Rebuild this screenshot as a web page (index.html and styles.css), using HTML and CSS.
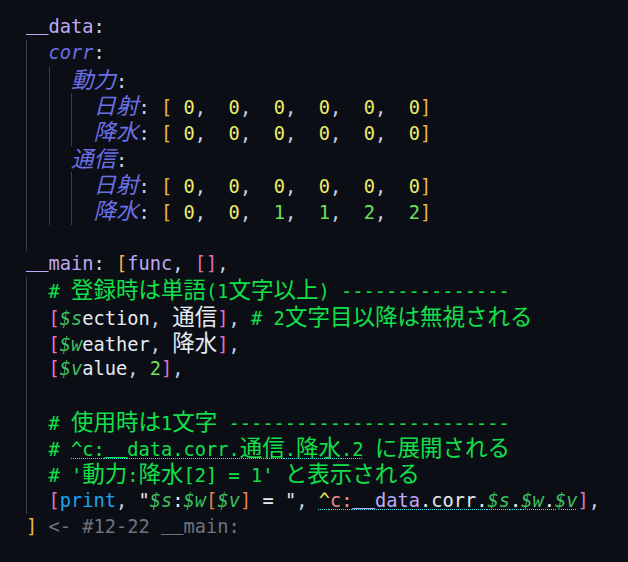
FILE: index.html
```html
<!DOCTYPE html>
<html lang="ja">
<head>
<meta charset="utf-8">
<link rel="stylesheet" href="styles.css">
</head>
<body>
<div class="editor">
  <div class="ln"><span class="k"><span class="us">__</span>data</span><span class="p">:</span></div>
  <div class="blk">
    <div class="ln"><span class="key">corr</span><span class="p">:</span></div>
    <div class="blk">
      <div class="ln"><span class="key j">動力</span><span class="p">:</span></div>
      <div class="blk">
        <div class="ln"><span class="key j">日射</span><span class="p">: </span><span class="br">[</span> <span class="z">0</span><span class="p">,</span>  <span class="z">0</span><span class="p">,</span>  <span class="z">0</span><span class="p">,</span>  <span class="z">0</span><span class="p">,</span>  <span class="z">0</span><span class="p">,</span>  <span class="z">0</span><span class="br">]</span></div>
        <div class="ln"><span class="key j">降水</span><span class="p">: </span><span class="br">[</span> <span class="z">0</span><span class="p">,</span>  <span class="z">0</span><span class="p">,</span>  <span class="z">0</span><span class="p">,</span>  <span class="z">0</span><span class="p">,</span>  <span class="z">0</span><span class="p">,</span>  <span class="z">0</span><span class="br">]</span></div>
      </div>
      <div class="ln"><span class="key j">通信</span><span class="p">:</span></div>
      <div class="blk">
        <div class="ln"><span class="key j">日射</span><span class="p">: </span><span class="br">[</span> <span class="z">0</span><span class="p">,</span>  <span class="z">0</span><span class="p">,</span>  <span class="z">0</span><span class="p">,</span>  <span class="z">0</span><span class="p">,</span>  <span class="z">0</span><span class="p">,</span>  <span class="z">0</span><span class="br">]</span></div>
        <div class="ln"><span class="key j">降水</span><span class="p">: </span><span class="br">[</span> <span class="z">0</span><span class="p">,</span>  <span class="z">0</span><span class="p">,</span>  <span class="n">1</span><span class="p">,</span>  <span class="n">1</span><span class="p">,</span>  <span class="n">2</span><span class="p">,</span>  <span class="n">2</span><span class="br">]</span></div>
      </div>
    </div>
    <div class="ln"></div>
  </div>
  <div class="ln"><span class="k"><span class="us">__</span>main</span><span class="p">: </span><span class="br">[</span><span class="k">func</span><span class="p">, </span><span class="pk">[]</span><span class="p">,</span></div>
  <div class="blk">
    <div class="ln cm"># <span class="j">登録時は単語</span>(1<span class="j">文字以上</span>) ---------------</div>
    <div class="ln"><span class="pk">[</span><span class="v">$s</span><span class="t">ection</span><span class="p">, </span><span class="t j">通信</span><span class="pk">]</span><span class="p">, </span><span class="cm"># 2<span class="j">文字目以降は無視される</span></span></div>
    <div class="ln"><span class="pk">[</span><span class="v">$w</span><span class="t">eather</span><span class="p">, </span><span class="t j">降水</span><span class="pk">]</span><span class="p">,</span></div>
    <div class="ln"><span class="pk">[</span><span class="v">$v</span><span class="t">alue</span><span class="p">, </span><span class="n">2</span><span class="pk">]</span><span class="p">,</span></div>
    <div class="ln"></div>
    <div class="ln cm"># <span class="j">使用時は</span>1<span class="j">文字</span> -------------------------</div>
    <div class="ln cm"># <span class="lk">^c:<span class="us">__</span>data.corr.<span class="j">通信</span>.<span class="j">降水</span>.2</span> <span class="j">に展開される</span></div>
    <div class="ln cm"># '<span class="j">動力</span>:<span class="j">降水</span>[2] = 1' <span class="j">と表示される</span></div>
    <div class="ln"><span class="pk">[</span><span class="fn">print</span><span class="p">, </span><span class="t">"</span><span class="v">$s</span><span class="t">:</span><span class="v">$w</span><span class="ob">[</span><span class="v">$v</span><span class="ob">]</span><span class="t"> = "</span><span class="p">, </span><span class="lk"><span class="ca">^</span><span class="cc">c:</span><span class="k"><span class="us">__</span>data</span><span class="t">.corr.</span><span class="v">$s</span><span class="t">.</span><span class="v">$w</span><span class="t">.</span><span class="v">$v</span></span><span class="pk">]</span><span class="p">,</span></div>
  </div>
  <div class="ln"><span class="br">]</span><span class="gr"> &lt;- #12-22 <span class="us">__</span>main:</span></div>
</div>
</body>
</html>
```
FILE: styles.css
```css
html, body {
  margin: 0;
  padding: 0;
  background: #0b0e14;
}
.editor {
  padding: 13.9px 0 0 26px;
  font-family: "DejaVu Sans Mono", "Noto Sans CJK JP", monospace;
  font-size: 18.7px;
  color: #e6ebf2;
}
.ln {
  height: 26.34px;
  line-height: 26.34px;
  white-space: pre;
}
.blk {
  border-left: 1px solid #3a3f48;
  padding-left: 21.5px;
}
.j {
  font-family: "Noto Sans CJK JP", sans-serif;
  font-size: 22.5px;
  line-height: 1;
}
.us {
  vertical-align: 3px;
  line-height: 1;
}
.k { color: #bfa8f5; }
.p { color: #c6d2e6; }
.key { color: #6b6fe6; font-style: italic; }
.br { color: #f0b43c; }
.z { color: #eded6a; }
.n { color: #6ee05a; }
.cm { color: #12e04a; }
.pk { color: #e070c0; }
.v { color: #3fbf5f; font-style: italic; }
.t { color: #e6ebf2; }
.fn { color: #1aa3f0; }
.ob { color: #e8804a; }
.ca { color: #f5e34a; }
.cc { color: #f08a8a; }
.gr { color: #6c7480; }
.lk {
  text-decoration: underline dotted #2ee6f0;
  text-decoration-thickness: 1px;
  text-underline-offset: 1.5px;
}
```
